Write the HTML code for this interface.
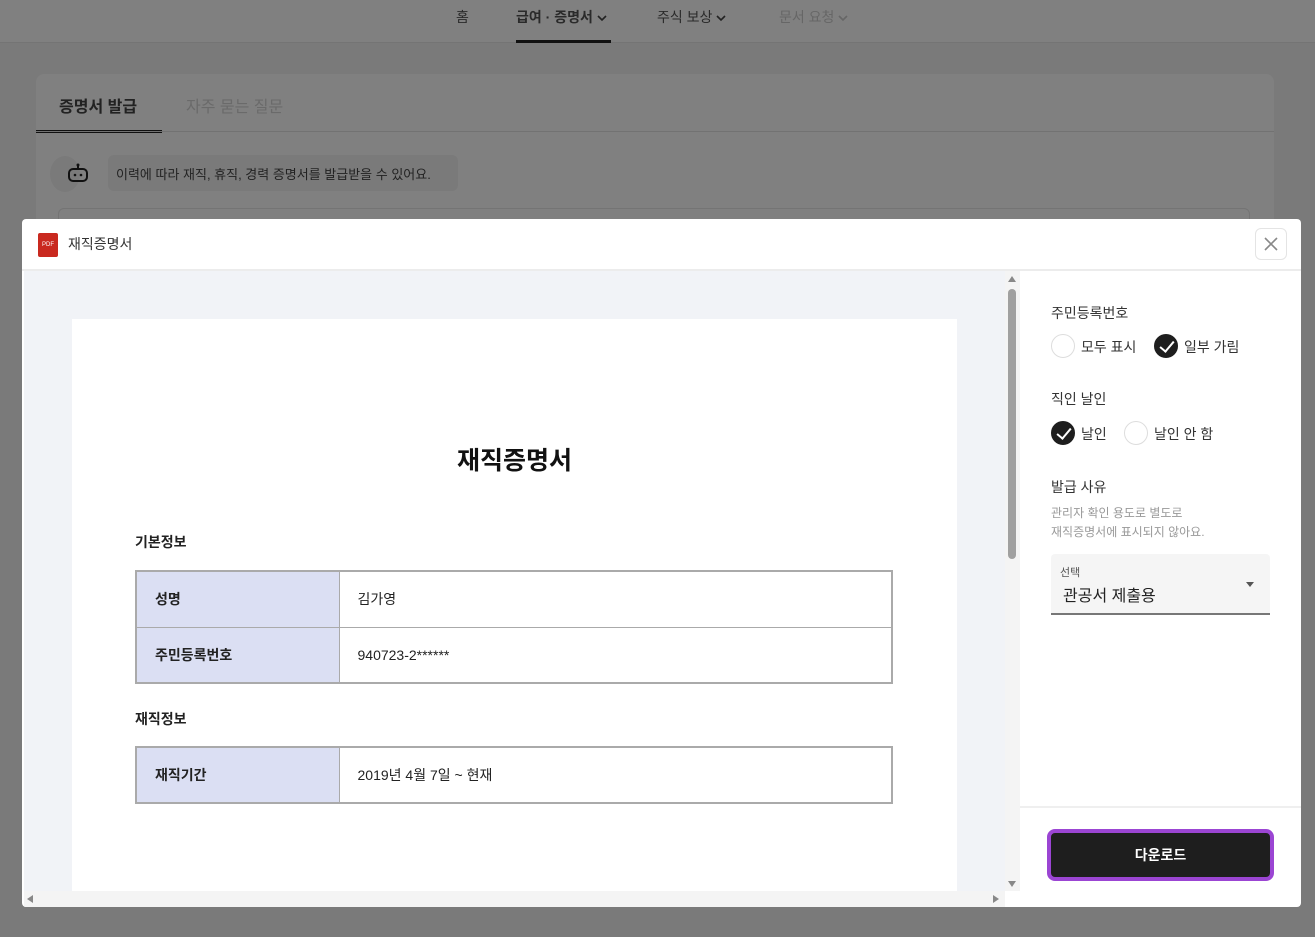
<!DOCTYPE html>
<html><head><meta charset="utf-8"><style>
*{box-sizing:border-box;margin:0;padding:0}
body{width:1315px;height:937px;overflow:hidden;background:#7a7a7a;font-family:"Liberation Sans","Noto Sans CJK KR",sans-serif;position:relative;color:#222}
.abs{position:absolute}
.nav{left:0;top:0;width:1315px;height:43px;background:#808080;border-bottom:1px solid #747474}
.nav span{position:absolute;top:7px;font-size:14px;color:#2a2a2a}
.nav svg{vertical-align:middle;margin-left:4px}
.card{left:36px;top:74px;width:1238px;height:200px;background:#808080;border-radius:8px}
.modal{left:22px;top:219px;width:1279px;height:688px;background:#fff;border-radius:4px;overflow:hidden}
td{border:1px solid #aaa;height:56px;font-size:14px}
td.h{background:#dbdff3;font-weight:bold;width:203px;padding-left:18px}
td.v{padding-left:18px}
.radio{position:absolute;width:24px;height:24px;border-radius:50%;border:1px solid #ddd;background:#fff}
.radio.on{background:#1e1e1e;border-color:#1e1e1e}
.radio.on::after{content:"";position:absolute;left:8px;top:3px;width:6px;height:12px;border:solid #fff;border-width:0 2px 2px 0;transform:rotate(40deg)}
.lbl{position:absolute;font-size:14px;color:#333}
</style></head><body>
<div class="abs nav">
<span style="left:456px">홈</span>
<span style="left:516px;font-weight:bold">급여 · 증명서<svg width="10" height="8" viewBox="0 0 10 8"><path d="M1 2l4 4 4-4" stroke="#222" stroke-width="1.6" fill="none"/></svg></span>
<div class="abs" style="left:516px;top:40px;width:95px;height:3px;background:#111"></div>
<span style="left:657px">주식 보상<svg width="10" height="8" viewBox="0 0 10 8"><path d="M1 2l4 4 4-4" stroke="#222" stroke-width="1.6" fill="none"/></svg></span>
<span style="left:779px;color:#666">문서 요청<svg width="10" height="8" viewBox="0 0 10 8"><path d="M1 2l4 4 4-4" stroke="#666" stroke-width="1.6" fill="none"/></svg></span>
</div>
<div class="abs card">
<div class="abs" style="left:23px;top:19px;font-size:16px;font-weight:bold;color:#222">증명서 발급</div>
<div class="abs" style="left:150px;top:19px;font-size:16px;color:#6a6a6a">자주 묻는 질문</div>
<div class="abs" style="left:0;top:56px;width:126px;height:3px;background:#111"></div>
<div class="abs" style="left:0;top:57px;width:1238px;height:1px;background:#727272"></div>
<div class="abs" style="left:14px;top:82px;width:30px;height:36px;border-radius:50%;background:#7a7a7a"></div>
<svg class="abs" style="left:30px;top:88px" width="24" height="24" viewBox="0 0 24 24"><path d="M12 2v4" stroke="#111" stroke-width="2"/><circle cx="12" cy="3" r="1.5" fill="#111"/><rect x="3" y="7" width="18" height="12" rx="4" stroke="#111" stroke-width="2" fill="none"/><circle cx="9" cy="13" r="1.3" fill="#111"/><circle cx="15" cy="13" r="1.3" fill="#111"/></svg>
<div class="abs" style="left:72px;top:81px;width:350px;height:36px;background:#7a7a7a;border-radius:6px;font-size:13px;padding:9px 8px;color:#222">이력에 따라 재직, 휴직, 경력 증명서를 발급받을 수 있어요.</div>
<div class="abs" style="left:22px;top:134px;width:1192px;height:20px;border:1px solid #747474;border-radius:6px"></div>
</div>
<div class="abs modal">
<div class="abs" style="left:16px;top:14px;width:20px;height:24px;background:#c9291f;border-radius:2px;color:#fff;font-size:6px;padding-top:9px;text-align:center">PDF</div>
<div class="abs" style="left:46px;top:15px;font-size:14px;color:#333">재직증명서</div>
<div class="abs" style="left:1233px;top:9px;width:32px;height:32px;border:1px solid #e4e4e4;border-radius:6px"><svg width="30" height="30" viewBox="0 0 30 30"><path d="M9 9l12 12M21 9L9 21" stroke="#888" stroke-width="1.6"/></svg></div>
<div class="abs" style="left:0;top:50px;width:1279px;height:2px;background:#ececec"></div>
<div class="abs" style="left:2px;top:52px;width:981px;height:620px;background:#f1f3f7"></div>
<div class="abs" style="left:50px;top:100px;width:885px;height:572px;background:#fff">
<div class="abs" style="left:0;top:122px;width:885px;text-align:center;font-size:25px;font-weight:bold;color:#111">재직증명서</div>
<div class="abs" style="left:63px;top:213px;font-size:14px;font-weight:bold">기본정보</div>
<table class="abs" style="left:63px;top:251px;width:758px;border-collapse:collapse;border:2px solid #aaa">
<tr><td class="h">성명</td><td class="v">김가영</td></tr>
<tr><td class="h">주민등록번호</td><td class="v">940723-2******</td></tr></table>
<div class="abs" style="left:63px;top:390px;font-size:14px;font-weight:bold">재직정보</div>
<table class="abs" style="left:63px;top:427px;width:758px;border-collapse:collapse;border:2px solid #aaa">
<tr><td class="h">재직기간</td><td class="v">2019년 4월 7일 ~ 현재</td></tr></table>
</div>
<div class="abs" style="left:983px;top:52px;width:15px;height:620px;background:#f4f4f4"></div>
<div class="abs" style="left:986px;top:70px;width:8px;height:270px;background:#a0a0a0;border-radius:4px"></div>
<div class="abs" style="left:986px;top:57px;border:4px solid transparent;border-bottom:6px solid #888;border-top:0"></div>
<div class="abs" style="left:986px;top:662px;border:4px solid transparent;border-top:6px solid #888;border-bottom:0"></div>
<div class="abs" style="left:2px;top:672px;width:981px;height:16px;background:#f4f4f4"></div>
<div class="abs" style="left:5px;top:676px;border:4px solid transparent;border-right:6px solid #888;border-left:0"></div>
<div class="abs" style="left:971px;top:676px;border:4px solid transparent;border-left:6px solid #888;border-right:0"></div>
<div class="abs" style="left:1029px;top:84px;font-size:14px;color:#333">주민등록번호</div>
<div class="radio" style="left:1029px;top:115px"></div><div class="lbl" style="left:1059px;top:118px">모두 표시</div>
<div class="radio on" style="left:1132px;top:115px"></div><div class="lbl" style="left:1162px;top:118px">일부 가림</div>
<div class="abs" style="left:1029px;top:170px;font-size:14px;color:#333">직인 날인</div>
<div class="radio on" style="left:1029px;top:202px"></div><div class="lbl" style="left:1059px;top:205px">날인</div>
<div class="radio" style="left:1102px;top:202px"></div><div class="lbl" style="left:1132px;top:205px">날인 안 함</div>
<div class="abs" style="left:1029px;top:258px;font-size:14px;color:#333">발급 사유</div>
<div class="abs" style="left:1029px;top:285px;font-size:12px;color:#999;line-height:19px">관리자 확인 용도로 별도로<br>재직증명서에 표시되지 않아요.</div>
<div class="abs" style="left:1029px;top:335px;width:219px;height:61px;background:#f5f5f5;border-bottom:2px solid #777;border-radius:4px 4px 0 0">
<div class="abs" style="left:9px;top:10px;font-size:11px;color:#555">선택</div>
<div class="abs" style="left:12px;top:28px;font-size:16px;color:#222">관공서 제출용</div>
<div class="abs" style="left:195px;top:28px;border:4px solid transparent;border-top:5px solid #555;border-bottom:0"></div>
</div>
<div class="abs" style="left:998px;top:587px;width:281px;height:2px;background:#efefef"></div>
<div class="abs" style="left:1025px;top:610px;width:227px;height:52px;border:4px solid #9b45d3;border-radius:8px;background:#1e1e1e;color:#fff;font-weight:bold;font-size:14px;text-align:center;line-height:44px">다운로드</div>
</div>
</body></html>
